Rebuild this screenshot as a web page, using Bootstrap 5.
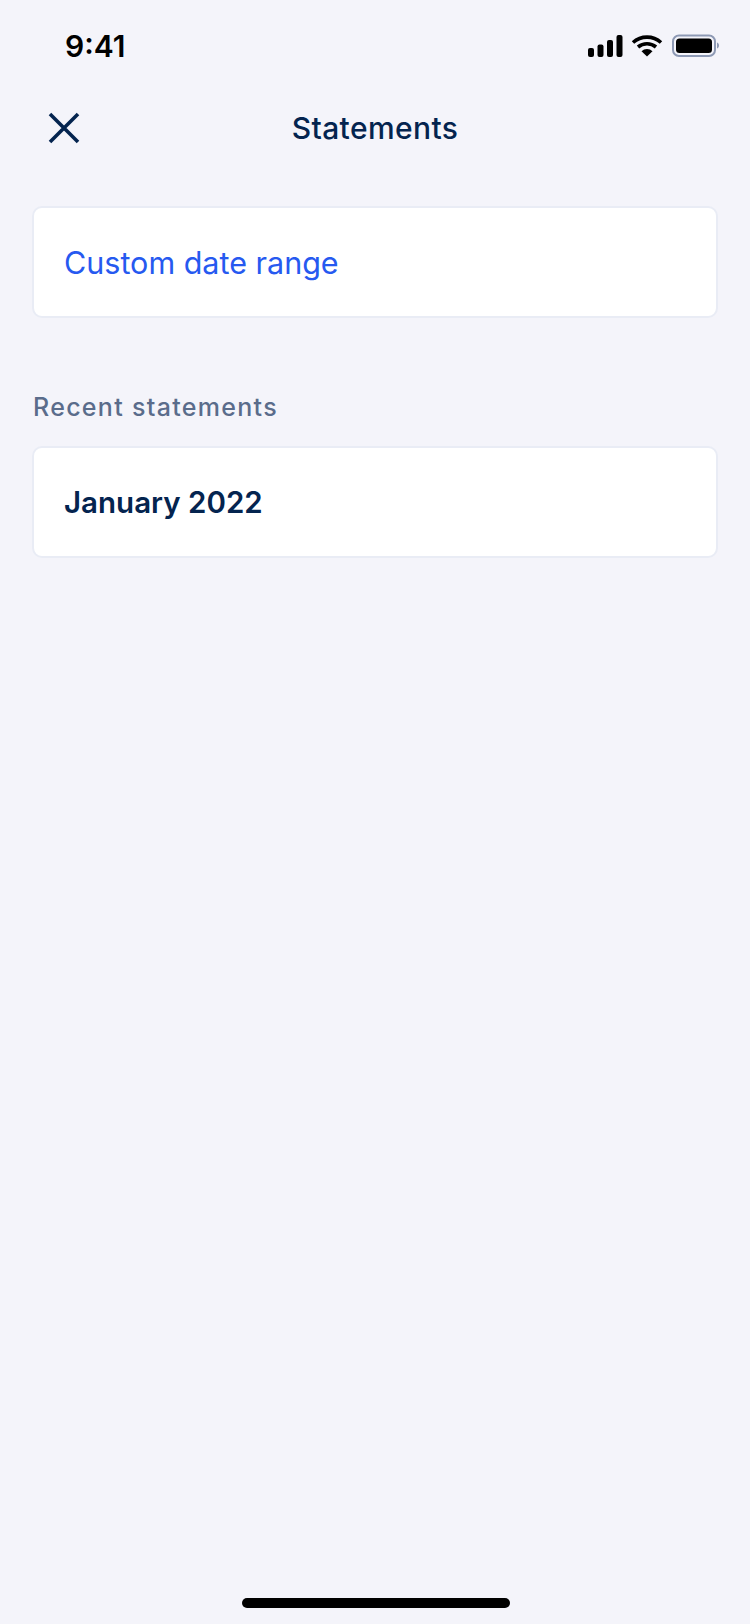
<!DOCTYPE html>
<html lang="en">
<head>
<meta charset="utf-8">
<title>Statements</title>
<link href="https://cdn.jsdelivr.net/npm/bootstrap@5.3.0/dist/css/bootstrap.min.css" rel="stylesheet">
<style>
html, body { background: #f4f4fa; }
.screen { width: 750px; height: 1624px; background: #f4f4fa; font-family: "Inter", "Liberation Sans", sans-serif; color: #04244f; }
.status-row { height: 88px; padding: 26px 30px 0 65px; }
.clock { font-size: 30px; font-weight: 600; color: #000; line-height: 40px; }
.head-row { height: 80px; padding: 0 48px; }
.head-title { font-size: 30px; font-weight: 500; letter-spacing: .4px; line-height: 36px; }
.close-btn { width: 32px; height: 32px; background: none; border: 0; padding: 0; display: block; }
.head-spacer { width: 32px; }
.panel { margin-left: 32px; width: 686px; height: 112px; background: #fff; border: 2px solid #e9ecf5; border-radius: 10px; padding: 0 30px; }
.panel-first { margin-top: 38px; padding-top: 2px; }
.panel-link { font-size: 30.5px; color: #2659f0; font-weight: 400; }
.section-label { margin: 73px 0 0 33px; font-size: 25px; font-weight: 500; color: #5a6c8b; line-height: 32px; letter-spacing: 1.3px; height: 55px; }
.panel-text { font-size: 29.5px; font-weight: 600; color: #04244f; }
.page-fill { padding-bottom: 16px; padding-left: 2px; }
.home-bar { width: 268px; height: 10px; border-radius: 5px; background: #000; }
</style>
</head>
<body class="m-0">
<div class="screen d-flex flex-column">
  <div class="status-row d-flex justify-content-between align-items-start">
    <span class="clock">9:41</span>
    <svg width="132" height="24" viewBox="0 0 132 24" class="mt-2" aria-hidden="true">
      <rect x="0" y="14" width="6" height="9" rx="2" fill="#000"/>
      <rect x="9.500" y="10.500" width="6" height="12.500" rx="2" fill="#000"/>
      <rect x="19" y="6" width="6" height="17" rx="2" fill="#000"/>
      <rect x="28.500" y="1" width="6" height="22" rx="2" fill="#000"/>
      <path d="M45 8.500a21 21 0 0 1 28 0M50 13a14 14 0 0 1 18 0" fill="none" stroke="#000" stroke-width="3.6"/>
      <path d="M53.500 17.200a8 8 0 0 1 11 0L59 22.500z" fill="#000"/>
      <rect x="85" y="1.500" width="42" height="20.500" rx="6" fill="none" stroke="#8d99b4" stroke-width="2"/>
      <rect x="88" y="4.500" width="36" height="14.500" rx="3.500" fill="#000"/>
      <path d="M129 8.500c1.500.5 2 1.800 2 3s-.5 2.500-2 3z" fill="#8d99b4"/>
    </svg>
  </div>
  <div class="head-row d-flex justify-content-between align-items-center">
    <button class="close-btn" type="button" aria-label="Close">
      <svg width="32" height="32" viewBox="0 0 32 32" aria-hidden="true"><path d="M2 2L30 30M30 2L2 30" stroke="#04244f" stroke-width="3.6" fill="none"/></svg>
    </button>
    <span class="head-title">Statements</span>
    <span class="head-spacer"></span>
  </div>
  <div class="panel panel-first d-flex align-items-center"><span class="panel-link">Custom date range</span></div>
  <div class="section-label">Recent statements</div>
  <div class="panel d-flex align-items-center"><span class="panel-text">January 2022</span></div>
  <div class="page-fill flex-grow-1 d-flex justify-content-center align-items-end"><div class="home-bar"></div></div>
</div>
<script src="https://cdn.jsdelivr.net/npm/bootstrap@5.3.0/dist/js/bootstrap.bundle.min.js"></script>
</body>
</html>
